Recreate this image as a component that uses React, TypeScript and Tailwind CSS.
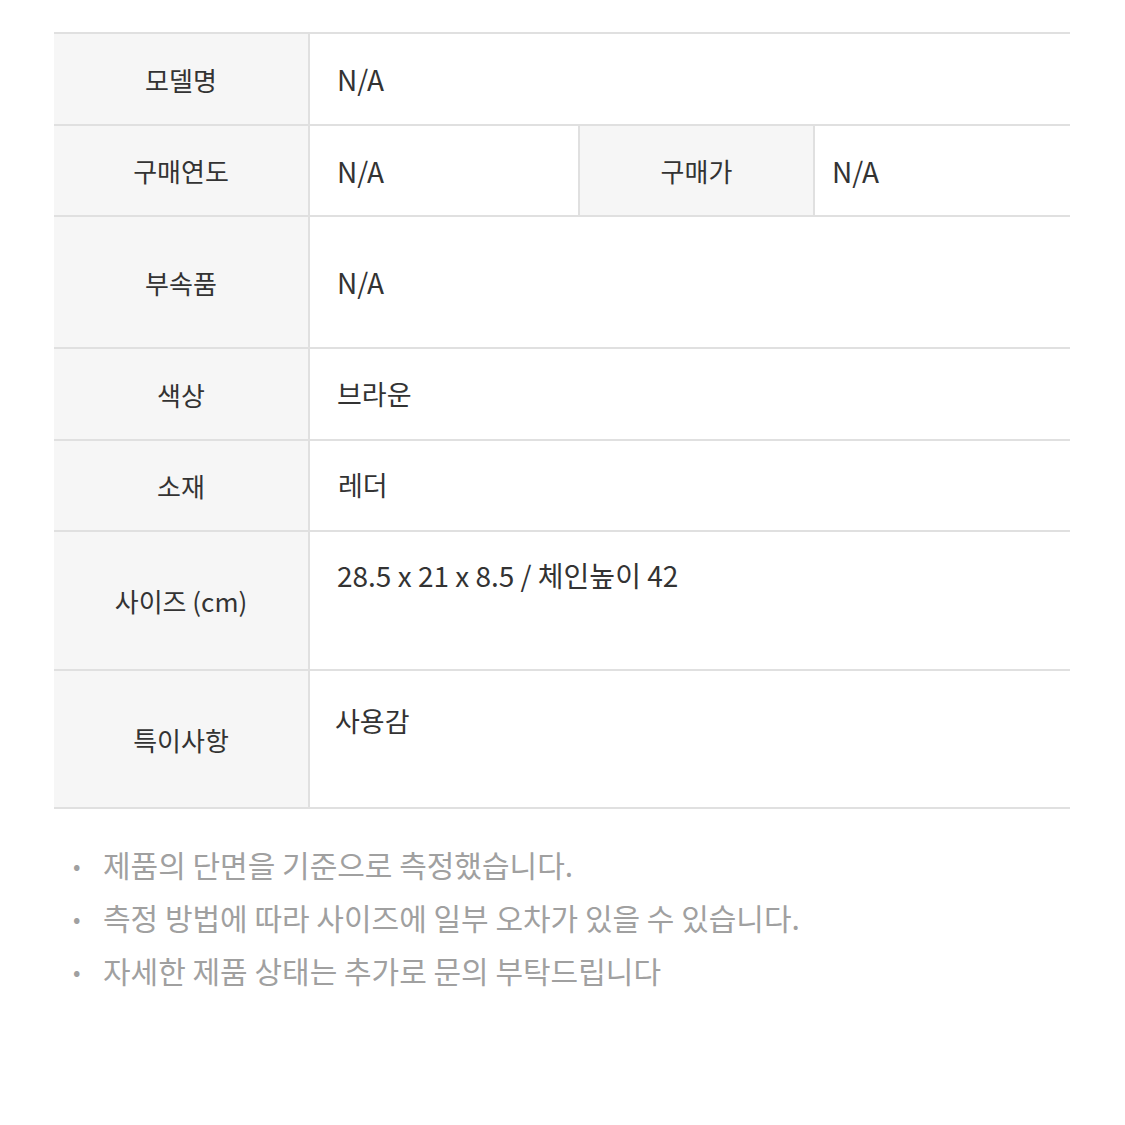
import React from "react";

const font = { fontFamily: '"Noto Sans CJK KR", "Noto Sans", sans-serif' };

function Label({ children, className = "" }: { children: React.ReactNode; className?: string }) {
  return (
    <div className={`w-[256px] shrink-0 bg-[#f6f6f6] border-r-2 border-[#e0e0e0] flex items-center justify-center text-[26px] text-[#333] ${className}`}>
      {children}
    </div>
  );
}

export default function App() {
  return (
    <div className="w-[1125px] h-[1125px] bg-white pt-[32px] pl-[54px]" style={font}>
      <div className="w-[1016px] border-t-2 border-[#e0e0e0]">
        <div className="flex h-[92px] border-b-2 border-[#e0e0e0]">
          <Label>모델명</Label>
          <div className="flex-1 flex items-center pl-[27px] text-[28px] text-[#333]">N/A</div>
        </div>
        <div className="flex h-[91px] border-b-2 border-[#e0e0e0]">
          <Label>구매연도</Label>
          <div className="w-[270px] shrink-0 flex items-center pl-[27px] text-[28px] text-[#333] border-r-2 border-[#e0e0e0]">N/A</div>
          <div className="w-[235px] shrink-0 bg-[#f6f6f6] border-r-2 border-[#e0e0e0] flex items-center justify-center text-[26px] text-[#333]">구매가</div>
          <div className="flex-1 flex items-center pl-[17px] text-[28px] text-[#333]">N/A</div>
        </div>
        <div className="flex h-[132px] border-b-2 border-[#e0e0e0]">
          <Label>부속품</Label>
          <div className="flex-1 flex items-center pl-[27px] text-[28px] text-[#333]">N/A</div>
        </div>
        <div className="flex h-[92px] border-b-2 border-[#e0e0e0]">
          <Label>색상</Label>
          <div className="flex-1 flex items-center pl-[27px] text-[27px] text-[#333]">브라운</div>
        </div>
        <div className="flex h-[91px] border-b-2 border-[#e0e0e0]">
          <Label>소재</Label>
          <div className="flex-1 flex items-center pl-[28px] text-[27px] text-[#333]">레더</div>
        </div>
        <div className="flex h-[139px] border-b-2 border-[#e0e0e0]">
          <Label>사이즈 (cm)</Label>
          <div className="flex-1 pl-[27px] pt-[23px] text-[28px] leading-[40px] text-[#333]">28.5 x 21 x 8.5 / 체인높이 42</div>
        </div>
        <div className="flex h-[138px] border-b-2 border-[#e0e0e0]">
          <Label>특이사항</Label>
          <div className="flex-1 pl-[25px] pt-[30px] text-[27px] leading-[40px] text-[#333]">사용감</div>
        </div>
      </div>
      <ul className="mt-[35px] flex flex-col gap-[13px] text-[30px] leading-[40px] text-[#a0a0a0]">
        {[
          "제품의 단면을 기준으로 측정했습니다.",
          "측정 방법에 따라 사이즈에 일부 오차가 있을 수 있습니다.",
          "자세한 제품 상태는 추가로 문의 부탁드립니다",
        ].map((t) => (
          <li key={t} className="flex items-center">
            <span className="w-[49px] pl-[19px] text-[22px]">•</span>
            <span>{t}</span>
          </li>
        ))}
      </ul>
    </div>
  );
}
